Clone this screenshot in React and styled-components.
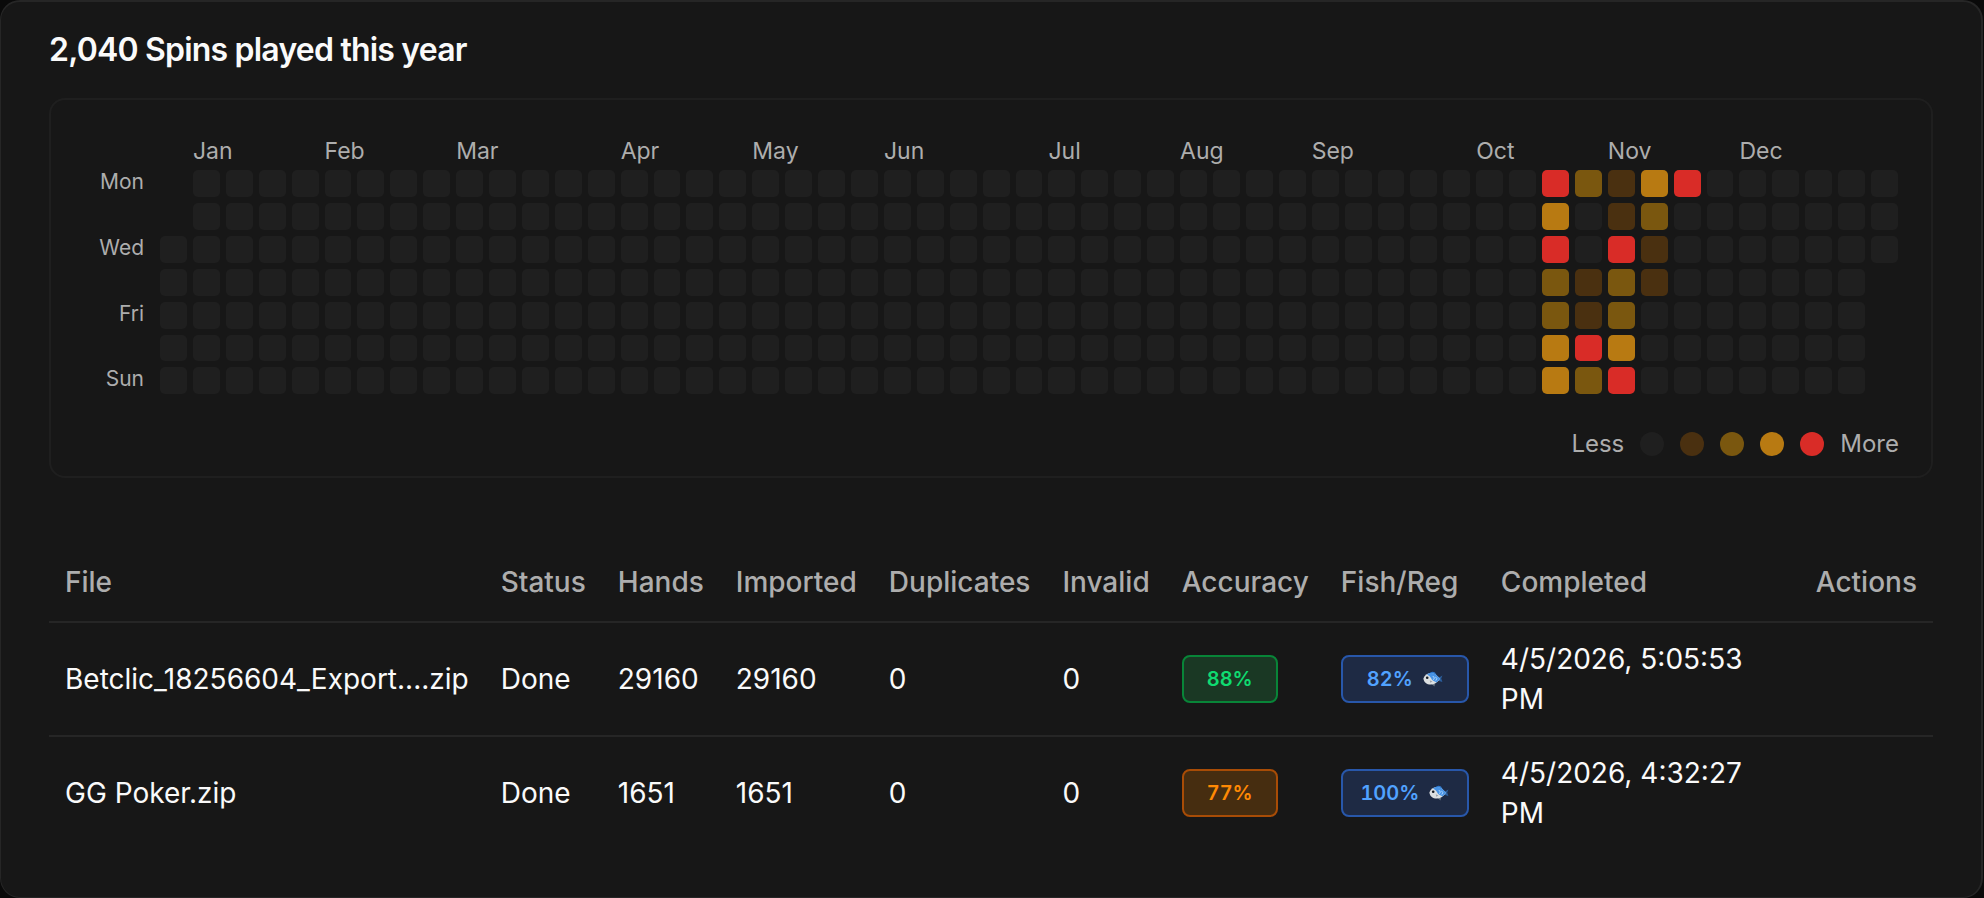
import React from "react";
import styled, { createGlobalStyle } from "styled-components";

const GlobalStyle = createGlobalStyle`
  *, *::before, *::after { box-sizing: border-box; }
  body {
    margin: 0;
    background: #0a0a0a;
    color: #fafafa;
    font-family: Inter, "Liberation Sans", sans-serif;
    -webkit-font-smoothing: antialiased;
  }
`;

const MUTED = "#adadad";

const Card = styled.main`
  min-height: 100vh;
  margin-right: 1px;
  padding: 32px 48px 48px;
  background: #171717;
  border: 2px solid #262626;
  border-width: 2px 2px 1px 1px;
  border-radius: 20px;
`;

const Title = styled.h1`
  margin: 0 0 32px;
  font-size: 32px;
  line-height: 32px;
  font-weight: 600;
  letter-spacing: -0.025em;
`;

const ChartPanel = styled.section`
  margin-bottom: 65px;
  padding: 39px 32px 20px;
  border: 2px solid #1f1f1f;
  border-radius: 16px;
`;

const Chart = styled.div`
  display: grid;
  grid-template-columns: 61px minmax(0, 1fr);
  column-gap: 16px;
  row-gap: 7px;
  padding-right: 1px;
`;

const WeekGrid = styled.div`
  display: grid;
  grid-template-columns: repeat(53, minmax(0, 1fr));
  gap: 6px;
  grid-column: 2;
`;

const Month = styled.span`
  grid-column: ${(p) => p.$week + 1} / span 3;
  font-size: 23px;
  line-height: 24px;
  color: ${MUTED};
`;

const Days = styled.div`
  display: grid;
  grid-template-rows: repeat(7, minmax(0, 1fr));
  row-gap: 6px;
`;

const Day = styled.span`
  font-size: 21px;
  line-height: 24px;
  text-align: right;
  color: ${MUTED};
`;

const LEVELS = ["#1f1f1f", "#4a3010", "#7a570f", "#b87a12", "#d92c27"];

const Cell = styled.span`
  grid-column: ${(p) => p.$week + 1};
  grid-row: ${(p) => p.$day + 1};
  aspect-ratio: 1;
  border-radius: 5px;
  background: ${(p) => LEVELS[p.$level]};
`;

const Legend = styled.div`
  display: flex;
  justify-content: flex-end;
  align-items: center;
  gap: 16px;
  margin-top: 38px;
  font-size: 24px;
  line-height: 24px;
  color: ${MUTED};
`;

const Dot = styled.span`
  width: 24px;
  height: 24px;
  border-radius: 50%;
  background: ${(p) => LEVELS[p.$level]};
`;

const Table = styled.table`
  width: 100%;
  border-collapse: separate;
  border-spacing: 0;
  font-size: 28px;
  line-height: 40px;
`;

const HeadCell = styled.th`
  height: 80px;
  padding: 0 16px;
  border-bottom: 2px solid #262626;
  font-weight: 500;
  text-align: ${(p) => (p.$end ? "right" : "left")};
  white-space: nowrap;
  color: ${MUTED};
`;

const DataCell = styled.td`
  padding: 16px;
  vertical-align: middle;
  white-space: ${(p) => (p.$wrap ? "normal" : "nowrap")};
  tr:not(:last-child) > & { border-bottom: 2px solid #262626; }
`;

const TONES = {
  green: { text: "#0fdb70", border: "#088538", fill: "#1a3824" },
  orange: { text: "#ff8904", border: "#a84c06", fill: "#462d10" },
  blue: { text: "#51a2ff", border: "#2857aa", fill: "#1e2a44" },
};

const Badge = styled.span`
  display: flex;
  align-items: center;
  justify-content: center;
  gap: 10px;
  width: ${(p) => (p.$wide ? "128px" : "96px")};
  height: 48px;
  border: 2px solid ${(p) => TONES[p.$tone].border};
  border-radius: 8px;
  background: ${(p) => TONES[p.$tone].fill};
  color: ${(p) => TONES[p.$tone].text};
  font-size: 20px;
  line-height: 24px;
  font-weight: 600;
  font-variant-numeric: tabular-nums;
`;

const FishDrawing = styled.svg`
  display: block;
  width: 20px;
  height: 16px;
`;

function Fish() {
  return (
    <FishDrawing viewBox="0 0 20 16" role="img" aria-label="fish">
      <path d="M14.5 7.5 L19.4 4.6 L18.2 7.6 L19.4 11 L14.5 9.6 Z" fill="#2b5f9e" />
      <path d="M6 2.8 Q8.6 -0.6 12 1.4 L13.8 4.6 Z" fill="#2f78cc" />
      <path d="M8.6 13 L11.4 15.4 L12.4 12.2 Z" fill="#5f6c7a" />
      <path d="M0.4 7.4 C1.6 3.6 5 1.8 8.6 2.2 C12 2.6 14.6 4.8 17 7.8 C14.4 11.6 11.6 13.6 7.6 13.6 C3.8 13.6 1 11.4 0.4 7.4 Z" fill="#dcdfe1" />
      <path d="M4 3.6 C6 2 7.8 1.8 9.8 2.3 C12.6 3.1 15 5.2 17 7.8 C15.8 9.4 14.8 10.4 13.4 11.4 C12.4 9.8 10 10.4 8.8 8.4 C8 6.4 6 4.8 4 3.6 Z" fill="#4793e6" />
      <path d="M9.8 5 L11.4 7 L10.4 8.8 M12.4 5.8 L13.8 7.6 L12.8 9.6" fill="none" stroke="#b9dcff" strokeWidth="0.9" />
      <path d="M6.8 9.2 L9.4 10.6 L7.2 11.8 Z" fill="#9ba3ab" />
      <circle cx="4.2" cy="6.8" r="1.3" fill="#171b22" />
    </FishDrawing>
  );
}

const MONTHS = [
  ["Jan", 1], ["Feb", 5], ["Mar", 9], ["Apr", 14], ["May", 18], ["Jun", 22],
  ["Jul", 27], ["Aug", 31], ["Sep", 35], ["Oct", 40], ["Nov", 44], ["Dec", 48],
];

const DAYS = ["Mon", "", "Wed", "", "Fri", "", "Sun"];

/* Activity level per weekday, keyed by week index. */
const ACTIVITY = {
  42: [4, 3, 4, 2, 2, 3, 3],
  43: [2, 0, 0, 1, 1, 4, 2],
  44: [1, 1, 4, 2, 2, 3, 4],
  45: [3, 2, 1, 1, 0, 0, 0],
  46: [4, 0, 0, 0, 0, 0, 0],
};

/* The year starts on a Wednesday and ends on one. */
const CELLS = Array.from({ length: 365 }, (_, i) => {
  const week = Math.floor((i + 2) / 7);
  const day = (i + 2) % 7;
  return { week, day, level: ACTIVITY[week]?.[day] ?? 0 };
});

const HEADINGS = [
  "File", "Status", "Hands", "Imported", "Duplicates",
  "Invalid", "Accuracy", "Fish/Reg", "Completed", "Actions",
];

const FILES = [
  {
    name: "Betclic_18256604_Export....zip", status: "Done", hands: 29160, imported: 29160,
    duplicates: 0, invalid: 0, accuracy: 88, tone: "green", fish: 82,
    completed: "4/5/2026, 5:05:53 PM",
  },
  {
    name: "GG Poker.zip", status: "Done", hands: 1651, imported: 1651,
    duplicates: 0, invalid: 0, accuracy: 77, tone: "orange", fish: 100,
    completed: "4/5/2026, 4:32:27 PM",
  },
];

export default function App() {
  return (
    <>
      <GlobalStyle />
      <Card>
        <Title>2,040 Spins played this year</Title>
        <ChartPanel aria-label="Spins per day">
          <Chart>
            <WeekGrid>
              {MONTHS.map(([name, week]) => (
                <Month key={name} $week={week}>{name}</Month>
              ))}
            </WeekGrid>
            <Days>
              {DAYS.map((d, i) => <Day key={i}>{d}</Day>)}
            </Days>
            <WeekGrid>
              {CELLS.map((c) => (
                <Cell key={`${c.week}-${c.day}`} $week={c.week} $day={c.day} $level={c.level} />
              ))}
            </WeekGrid>
          </Chart>
          <Legend>
            <span>Less</span>
            {LEVELS.map((c, i) => <Dot key={c} $level={i} />)}
            <span>More</span>
          </Legend>
        </ChartPanel>
        <Table>
          <thead>
            <tr>
              {HEADINGS.map((h) => (
                <HeadCell key={h} scope="col" $end={h === "Actions"}>{h}</HeadCell>
              ))}
            </tr>
          </thead>
          <tbody>
            {FILES.map((f) => (
              <tr key={f.name}>
                <DataCell>{f.name}</DataCell>
                <DataCell>{f.status}</DataCell>
                <DataCell>{f.hands}</DataCell>
                <DataCell>{f.imported}</DataCell>
                <DataCell>{f.duplicates}</DataCell>
                <DataCell>{f.invalid}</DataCell>
                <DataCell><Badge $tone={f.tone}>{f.accuracy}%</Badge></DataCell>
                <DataCell><Badge $tone="blue" $wide>{f.fish}% <Fish /></Badge></DataCell>
                <DataCell $wrap>{f.completed}</DataCell>
                <DataCell />
              </tr>
            ))}
          </tbody>
        </Table>
      </Card>
    </>
  );
}
